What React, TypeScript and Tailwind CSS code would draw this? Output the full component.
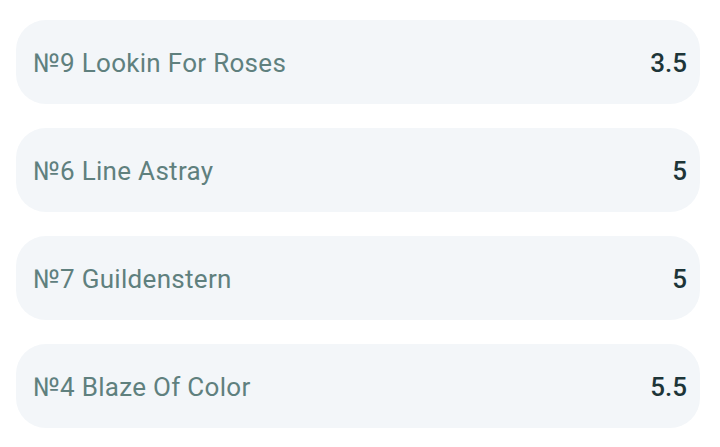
const rows = [
  { name: "№9 Lookin For Roses", value: "3.5" },
  { name: "№6 Line Astray", value: "5" },
  { name: "№7 Guildenstern", value: "5" },
  { name: "№4 Blaze Of Color", value: "5.5" },
];

export default function App() {
  return (
    <div className="min-h-screen bg-white pl-4 pr-5 pt-5 font-['Roboto',sans-serif]">
      <div className="flex flex-col gap-6">
        {rows.map((r) => (
          <div
            key={r.name}
            className="flex h-[84px] items-center justify-between rounded-[30px] bg-[#f3f6f9] pl-[17px] pr-[13px] pt-[3px]"
          >
            <span className="text-[26px] tracking-[0.3px] text-[#5f807e]">{r.name}</span>
            <span className="text-[26px] font-medium text-[#1d3538]">{r.value}</span>
          </div>
        ))}
      </div>
    </div>
  );
}
